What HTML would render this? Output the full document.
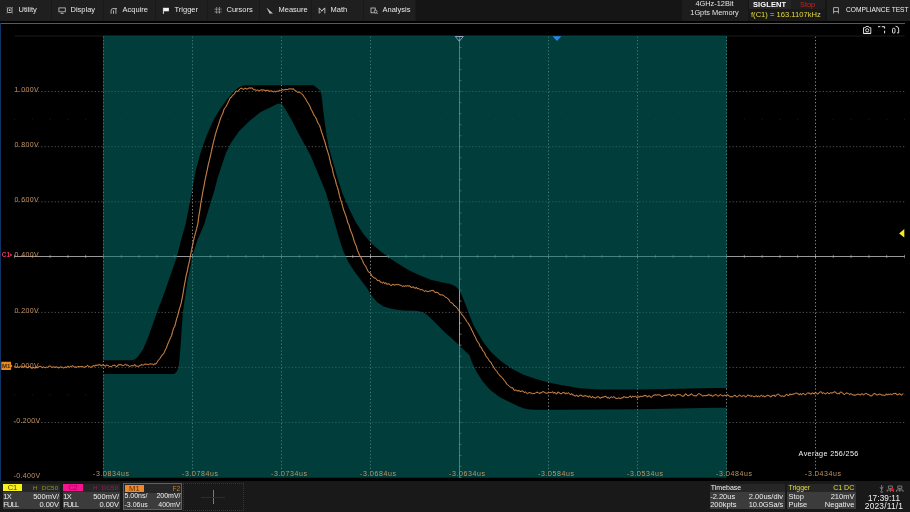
<!DOCTYPE html>
<html><head><meta charset="utf-8"><title>scope</title>
<style>
html,body{margin:0;padding:0;background:#000;}
body{width:910px;height:512px;overflow:hidden;position:relative;font-family:"Liberation Sans",sans-serif;}
.ga{will-change:transform;}
.abs{position:absolute;}
#top{left:0;top:0;width:910px;height:21px;background:#151515;}
#menu{left:0;top:0;width:416px;height:21px;background:#1f1f1f;}
.mb{position:absolute;top:0;width:52px;height:21px;box-sizing:border-box;border-right:1px solid #191919;color:#e8e8e8;font-size:7.5px;line-height:19px;}
.mb span{position:absolute;left:18.5px;top:0;}
.mi{position:absolute;left:6px;top:5.5px;}
#blue{left:0;top:22.6px;width:905px;height:1.35px;background:#305ea6;}
#lblue{left:0;top:23px;width:1.2px;height:458px;background:#103366;}
.tb{position:absolute;top:0;height:21px;background:#1d1d1d;color:#e4e4e4;font-size:7.4px;white-space:nowrap;}
.tb div{position:absolute;white-space:nowrap;}
#bot{left:0;top:481.3px;width:910px;height:30.7px;background:#191919;}
.cb{position:absolute;top:483.5px;height:25px;background:#3c3c3c;color:#ececec;font-size:7.5px;}
.cb .hd{position:absolute;left:0;top:0;right:0;height:8.5px;background:#262626;}
.cb div.t{position:absolute;white-space:nowrap;line-height:8px;}
svg text{font-family:"Liberation Sans",sans-serif;}
</style></head><body>
<div id="wrap" style="position:absolute;left:0;top:0;width:910px;height:512px;will-change:transform;">
<div id="top" class="abs"></div>
<div id="menu" class="abs">
<div class="mb" style="left:0px"><svg class="mi" viewBox="0 0 8 9" width="8" height="9"><rect x="1.4" y="1.9" width="4.6" height="4.6" rx="0.8" fill="none" stroke="#cfcfcf" stroke-width="0.8"/><circle cx="3.7" cy="4.2" r="0.9" fill="#cfcfcf"/><path d="M0.6 1.2l1.2 1.1M6.8 1.2l-1.2 1.1M0.6 7.3l1.2-1.1M6.8 7.3l-1.2-1.1" stroke="#bdbdbd" stroke-width="0.7"/></svg><span>Utility</span></div>
<div class="mb" style="left:52px"><svg class="mi" viewBox="0 0 8 9" width="8" height="9"><rect x="0.9" y="1.9" width="6.4" height="3.9" fill="none" stroke="#c8c8c8" stroke-width="0.8"/><path d="M2.6 7.3h3" stroke="#c8c8c8" stroke-width="0.9"/></svg><span>Display</span></div>
<div class="mb" style="left:104px"><svg class="mi" viewBox="0 0 8 9" width="8" height="9"><path d="M1.1 7.8V4.6Q1.1 2.6 3 2.6H6.9M3.5 7.8V4.4M5.9 7.8V2.8" fill="none" stroke="#c8c8c8" stroke-width="0.85"/></svg><span>Acquire</span></div>
<div class="mb" style="left:156px"><svg class="mi" viewBox="0 0 8 9" width="8" height="9"><path d="M1.4 1.8V7.9" stroke="#f2f2f2" stroke-width="0.9"/><path d="M1.6 1.8H6.9V5.3H1.6Z" fill="#f2f2f2"/></svg><span>Trigger</span></div>
<div class="mb" style="left:208px"><svg class="mi" viewBox="0 0 8 9" width="8" height="9"><path d="M2.7 1.2V7.8M5.5 1.2V7.8M0.7 3.1H7.5M0.7 5.9H7.5" fill="none" stroke="#c4c4c4" stroke-width="0.8" stroke-dasharray="1.1 0.45"/></svg><span>Cursors</span></div>
<div class="mb" style="left:260px"><svg class="mi" viewBox="0 0 8 9" width="8" height="9"><path d="M1.4 2.4L7 7.4H3.6Z" fill="#c4c4c4"/><path d="M1.2 2.2L4 7.4" stroke="#c4c4c4" stroke-width="0.7"/></svg><span>Measure</span></div>
<div class="mb" style="left:312px"><svg class="mi" viewBox="0 0 8 9" width="8" height="9"><path d="M1.2 7.4V1.9L4 5L6.8 1.9V7.4" fill="none" stroke="#cfcfcf" stroke-width="0.85"/><path d="M1.6 7.2L6.4 2.1" stroke="#cfcfcf" stroke-width="0.55"/></svg><span>Math</span></div>
<div class="mb" style="left:364px"><svg class="mi" viewBox="0 0 8 9" width="8" height="9"><rect x="1" y="2" width="4.2" height="4.8" fill="none" stroke="#cfcfcf" stroke-width="0.8"/><circle cx="5.6" cy="5.6" r="1.4" fill="#1f1f1f" stroke="#cfcfcf" stroke-width="0.75"/><path d="M6.6 6.7L7.6 8" stroke="#cfcfcf" stroke-width="0.8"/></svg><span>Analysis</span></div>
</div>

<div class="tb" style="left:681.5px;width:66px;">
 <div style="left:0;width:66px;text-align:center;top:-0.6px;line-height:9px;">4GHz-12Bit</div>
 <div style="left:0;width:66px;text-align:center;top:7.9px;line-height:9px;">1Gpts Memory</div>
</div>
<div class="tb" style="left:748.5px;width:76.5px;background:#191919;">
 <div style="left:0;top:0;width:42px;height:9px;background:#262626;"></div><div style="left:42px;top:0;width:34.5px;height:9px;background:#1e1e1e;"></div>
 <div style="left:4.5px;top:0.3px;line-height:9px;font-weight:bold;font-size:7.5px;color:#fff;letter-spacing:0.1px;">SIGLENT</div>
 <div style="left:51.5px;top:0.3px;line-height:9px;color:#cc201c;font-size:7.4px;">Stop</div>
 <div style="left:2.5px;top:9.6px;line-height:9px;color:#e6dc3c;font-size:7.6px;">f(C1) = 163.1107kHz</div>
</div>
<div class="tb" style="left:827px;width:83px;background:#1e1e1e;">
 <svg class="abs" style="left:6px;top:6.5px" width="6" height="7" viewBox="0 0 6 7"><path d="M0.6 6.5V0.6H5.4V6.5M0.6 4.6H5.4" fill="none" stroke="#aaa" stroke-width="1"/></svg>
 <div style="left:19px;top:5px;line-height:9px;font-size:6.65px;color:#f0f0f0;">COMPLIANCE TEST</div>
</div>

<div id="blue" class="abs"></div>
<div id="lblue" class="abs"></div>

<svg class="abs" style="left:0;top:0" width="910" height="512" viewBox="0 0 910 512">
 <!-- grid (under the translucent mask overlay) -->
 <g stroke="#8a8a8a" stroke-width="1" stroke-dasharray="1.25 2.2" fill="none">
<line x1="103.50" y1="36.5" x2="103.50" y2="477.5"/>
<line x1="192.50" y1="36.5" x2="192.50" y2="477.5"/>
<line x1="281.50" y1="36.5" x2="281.50" y2="477.5"/>
<line x1="370.50" y1="36.5" x2="370.50" y2="477.5"/>
<line x1="548.50" y1="36.5" x2="548.50" y2="477.5"/>
<line x1="637.50" y1="36.5" x2="637.50" y2="477.5"/>
<line x1="726.50" y1="36.5" x2="726.50" y2="477.5"/>
<line x1="815.50" y1="36.5" x2="815.50" y2="477.5"/>
 </g>
 <g stroke="#4e4e4e" stroke-width="1" stroke-dasharray="1.3 2.04" fill="none">
<line x1="14.5" y1="91.50" x2="904.5" y2="91.50"/>
<line x1="14.5" y1="146.70" x2="904.5" y2="146.70"/>
<line x1="14.5" y1="201.80" x2="904.5" y2="201.80"/>
<line x1="14.5" y1="312.40" x2="904.5" y2="312.40"/>
<line x1="14.5" y1="367.40" x2="904.5" y2="367.40"/>
<line x1="14.5" y1="422.50" x2="904.5" y2="422.50"/>
 </g>
 <line x1="14.5" y1="36" x2="904.5" y2="36" stroke="#1c1c1c" stroke-width="1"/>
 <g stroke="#989898" stroke-width="1" fill="none">
  <line x1="14.5" y1="256.50" x2="904.5" y2="256.50"/>
  <line x1="459.50" y1="36.5" x2="459.50" y2="477.5"/>
 </g>
 <g stroke="#c8c8c8" stroke-width="0.8" stroke-opacity="0.65">
<line x1="14.50" y1="254.90" x2="14.50" y2="258.10"/>
<line x1="32.30" y1="254.90" x2="32.30" y2="258.10"/>
<line x1="50.10" y1="254.90" x2="50.10" y2="258.10"/>
<line x1="67.90" y1="254.90" x2="67.90" y2="258.10"/>
<line x1="85.70" y1="254.90" x2="85.70" y2="258.10"/>
<line x1="103.50" y1="254.90" x2="103.50" y2="258.10"/>
<line x1="121.30" y1="254.90" x2="121.30" y2="258.10"/>
<line x1="139.10" y1="254.90" x2="139.10" y2="258.10"/>
<line x1="156.90" y1="254.90" x2="156.90" y2="258.10"/>
<line x1="174.70" y1="254.90" x2="174.70" y2="258.10"/>
<line x1="192.50" y1="254.90" x2="192.50" y2="258.10"/>
<line x1="210.30" y1="254.90" x2="210.30" y2="258.10"/>
<line x1="228.10" y1="254.90" x2="228.10" y2="258.10"/>
<line x1="245.90" y1="254.90" x2="245.90" y2="258.10"/>
<line x1="263.70" y1="254.90" x2="263.70" y2="258.10"/>
<line x1="281.50" y1="254.90" x2="281.50" y2="258.10"/>
<line x1="299.30" y1="254.90" x2="299.30" y2="258.10"/>
<line x1="317.10" y1="254.90" x2="317.10" y2="258.10"/>
<line x1="334.90" y1="254.90" x2="334.90" y2="258.10"/>
<line x1="352.70" y1="254.90" x2="352.70" y2="258.10"/>
<line x1="370.50" y1="254.90" x2="370.50" y2="258.10"/>
<line x1="388.30" y1="254.90" x2="388.30" y2="258.10"/>
<line x1="406.10" y1="254.90" x2="406.10" y2="258.10"/>
<line x1="423.90" y1="254.90" x2="423.90" y2="258.10"/>
<line x1="441.70" y1="254.90" x2="441.70" y2="258.10"/>
<line x1="459.50" y1="254.90" x2="459.50" y2="258.10"/>
<line x1="477.30" y1="254.90" x2="477.30" y2="258.10"/>
<line x1="495.10" y1="254.90" x2="495.10" y2="258.10"/>
<line x1="512.90" y1="254.90" x2="512.90" y2="258.10"/>
<line x1="530.70" y1="254.90" x2="530.70" y2="258.10"/>
<line x1="548.50" y1="254.90" x2="548.50" y2="258.10"/>
<line x1="566.30" y1="254.90" x2="566.30" y2="258.10"/>
<line x1="584.10" y1="254.90" x2="584.10" y2="258.10"/>
<line x1="601.90" y1="254.90" x2="601.90" y2="258.10"/>
<line x1="619.70" y1="254.90" x2="619.70" y2="258.10"/>
<line x1="637.50" y1="254.90" x2="637.50" y2="258.10"/>
<line x1="655.30" y1="254.90" x2="655.30" y2="258.10"/>
<line x1="673.10" y1="254.90" x2="673.10" y2="258.10"/>
<line x1="690.90" y1="254.90" x2="690.90" y2="258.10"/>
<line x1="708.70" y1="254.90" x2="708.70" y2="258.10"/>
<line x1="726.50" y1="254.90" x2="726.50" y2="258.10"/>
<line x1="744.30" y1="254.90" x2="744.30" y2="258.10"/>
<line x1="762.10" y1="254.90" x2="762.10" y2="258.10"/>
<line x1="779.90" y1="254.90" x2="779.90" y2="258.10"/>
<line x1="797.70" y1="254.90" x2="797.70" y2="258.10"/>
<line x1="815.50" y1="254.90" x2="815.50" y2="258.10"/>
<line x1="833.30" y1="254.90" x2="833.30" y2="258.10"/>
<line x1="851.10" y1="254.90" x2="851.10" y2="258.10"/>
<line x1="868.90" y1="254.90" x2="868.90" y2="258.10"/>
<line x1="886.70" y1="254.90" x2="886.70" y2="258.10"/>
<line x1="904.50" y1="254.90" x2="904.50" y2="258.10"/>
<line x1="459.00" y1="36.50" x2="461.50" y2="36.50"/>
<line x1="459.00" y1="47.52" x2="461.50" y2="47.52"/>
<line x1="459.00" y1="58.55" x2="461.50" y2="58.55"/>
<line x1="459.00" y1="69.58" x2="461.50" y2="69.58"/>
<line x1="459.00" y1="80.60" x2="461.50" y2="80.60"/>
<line x1="459.00" y1="91.62" x2="461.50" y2="91.62"/>
<line x1="459.00" y1="102.65" x2="461.50" y2="102.65"/>
<line x1="459.00" y1="113.67" x2="461.50" y2="113.67"/>
<line x1="459.00" y1="124.70" x2="461.50" y2="124.70"/>
<line x1="459.00" y1="135.72" x2="461.50" y2="135.72"/>
<line x1="459.00" y1="146.75" x2="461.50" y2="146.75"/>
<line x1="459.00" y1="157.78" x2="461.50" y2="157.78"/>
<line x1="459.00" y1="168.80" x2="461.50" y2="168.80"/>
<line x1="459.00" y1="179.82" x2="461.50" y2="179.82"/>
<line x1="459.00" y1="190.85" x2="461.50" y2="190.85"/>
<line x1="459.00" y1="201.88" x2="461.50" y2="201.88"/>
<line x1="459.00" y1="212.90" x2="461.50" y2="212.90"/>
<line x1="459.00" y1="223.93" x2="461.50" y2="223.93"/>
<line x1="459.00" y1="234.95" x2="461.50" y2="234.95"/>
<line x1="459.00" y1="245.97" x2="461.50" y2="245.97"/>
<line x1="459.00" y1="257.00" x2="461.50" y2="257.00"/>
<line x1="459.00" y1="268.02" x2="461.50" y2="268.02"/>
<line x1="459.00" y1="279.05" x2="461.50" y2="279.05"/>
<line x1="459.00" y1="290.07" x2="461.50" y2="290.07"/>
<line x1="459.00" y1="301.10" x2="461.50" y2="301.10"/>
<line x1="459.00" y1="312.12" x2="461.50" y2="312.12"/>
<line x1="459.00" y1="323.15" x2="461.50" y2="323.15"/>
<line x1="459.00" y1="334.18" x2="461.50" y2="334.18"/>
<line x1="459.00" y1="345.20" x2="461.50" y2="345.20"/>
<line x1="459.00" y1="356.23" x2="461.50" y2="356.23"/>
<line x1="459.00" y1="367.25" x2="461.50" y2="367.25"/>
<line x1="459.00" y1="378.27" x2="461.50" y2="378.27"/>
<line x1="459.00" y1="389.30" x2="461.50" y2="389.30"/>
<line x1="459.00" y1="400.32" x2="461.50" y2="400.32"/>
<line x1="459.00" y1="411.35" x2="461.50" y2="411.35"/>
<line x1="459.00" y1="422.38" x2="461.50" y2="422.38"/>
<line x1="459.00" y1="433.40" x2="461.50" y2="433.40"/>
<line x1="459.00" y1="444.43" x2="461.50" y2="444.43"/>
<line x1="459.00" y1="455.45" x2="461.50" y2="455.45"/>
<line x1="459.00" y1="466.48" x2="461.50" y2="466.48"/>
<line x1="459.00" y1="477.50" x2="461.50" y2="477.50"/>
 </g>
 <g fill="#8a8a8a" fill-opacity="0.22">
<rect x="14.00" y="118.69" width="1" height="1"/>
<rect x="31.80" y="118.69" width="1" height="1"/>
<rect x="49.60" y="118.69" width="1" height="1"/>
<rect x="67.40" y="118.69" width="1" height="1"/>
<rect x="85.20" y="118.69" width="1" height="1"/>
<rect x="103.00" y="118.69" width="1" height="1"/>
<rect x="120.80" y="118.69" width="1" height="1"/>
<rect x="138.60" y="118.69" width="1" height="1"/>
<rect x="156.40" y="118.69" width="1" height="1"/>
<rect x="174.20" y="118.69" width="1" height="1"/>
<rect x="192.00" y="118.69" width="1" height="1"/>
<rect x="209.80" y="118.69" width="1" height="1"/>
<rect x="227.60" y="118.69" width="1" height="1"/>
<rect x="245.40" y="118.69" width="1" height="1"/>
<rect x="263.20" y="118.69" width="1" height="1"/>
<rect x="281.00" y="118.69" width="1" height="1"/>
<rect x="298.80" y="118.69" width="1" height="1"/>
<rect x="316.60" y="118.69" width="1" height="1"/>
<rect x="334.40" y="118.69" width="1" height="1"/>
<rect x="352.20" y="118.69" width="1" height="1"/>
<rect x="370.00" y="118.69" width="1" height="1"/>
<rect x="387.80" y="118.69" width="1" height="1"/>
<rect x="405.60" y="118.69" width="1" height="1"/>
<rect x="423.40" y="118.69" width="1" height="1"/>
<rect x="441.20" y="118.69" width="1" height="1"/>
<rect x="459.00" y="118.69" width="1" height="1"/>
<rect x="476.80" y="118.69" width="1" height="1"/>
<rect x="494.60" y="118.69" width="1" height="1"/>
<rect x="512.40" y="118.69" width="1" height="1"/>
<rect x="530.20" y="118.69" width="1" height="1"/>
<rect x="548.00" y="118.69" width="1" height="1"/>
<rect x="565.80" y="118.69" width="1" height="1"/>
<rect x="583.60" y="118.69" width="1" height="1"/>
<rect x="601.40" y="118.69" width="1" height="1"/>
<rect x="619.20" y="118.69" width="1" height="1"/>
<rect x="637.00" y="118.69" width="1" height="1"/>
<rect x="654.80" y="118.69" width="1" height="1"/>
<rect x="672.60" y="118.69" width="1" height="1"/>
<rect x="690.40" y="118.69" width="1" height="1"/>
<rect x="708.20" y="118.69" width="1" height="1"/>
<rect x="726.00" y="118.69" width="1" height="1"/>
<rect x="743.80" y="118.69" width="1" height="1"/>
<rect x="761.60" y="118.69" width="1" height="1"/>
<rect x="779.40" y="118.69" width="1" height="1"/>
<rect x="797.20" y="118.69" width="1" height="1"/>
<rect x="815.00" y="118.69" width="1" height="1"/>
<rect x="832.80" y="118.69" width="1" height="1"/>
<rect x="850.60" y="118.69" width="1" height="1"/>
<rect x="868.40" y="118.69" width="1" height="1"/>
<rect x="886.20" y="118.69" width="1" height="1"/>
<rect x="904.00" y="118.69" width="1" height="1"/>
<rect x="14.00" y="394.31" width="1" height="1"/>
<rect x="31.80" y="394.31" width="1" height="1"/>
<rect x="49.60" y="394.31" width="1" height="1"/>
<rect x="67.40" y="394.31" width="1" height="1"/>
<rect x="85.20" y="394.31" width="1" height="1"/>
<rect x="103.00" y="394.31" width="1" height="1"/>
<rect x="120.80" y="394.31" width="1" height="1"/>
<rect x="138.60" y="394.31" width="1" height="1"/>
<rect x="156.40" y="394.31" width="1" height="1"/>
<rect x="174.20" y="394.31" width="1" height="1"/>
<rect x="192.00" y="394.31" width="1" height="1"/>
<rect x="209.80" y="394.31" width="1" height="1"/>
<rect x="227.60" y="394.31" width="1" height="1"/>
<rect x="245.40" y="394.31" width="1" height="1"/>
<rect x="263.20" y="394.31" width="1" height="1"/>
<rect x="281.00" y="394.31" width="1" height="1"/>
<rect x="298.80" y="394.31" width="1" height="1"/>
<rect x="316.60" y="394.31" width="1" height="1"/>
<rect x="334.40" y="394.31" width="1" height="1"/>
<rect x="352.20" y="394.31" width="1" height="1"/>
<rect x="370.00" y="394.31" width="1" height="1"/>
<rect x="387.80" y="394.31" width="1" height="1"/>
<rect x="405.60" y="394.31" width="1" height="1"/>
<rect x="423.40" y="394.31" width="1" height="1"/>
<rect x="441.20" y="394.31" width="1" height="1"/>
<rect x="459.00" y="394.31" width="1" height="1"/>
<rect x="476.80" y="394.31" width="1" height="1"/>
<rect x="494.60" y="394.31" width="1" height="1"/>
<rect x="512.40" y="394.31" width="1" height="1"/>
<rect x="530.20" y="394.31" width="1" height="1"/>
<rect x="548.00" y="394.31" width="1" height="1"/>
<rect x="565.80" y="394.31" width="1" height="1"/>
<rect x="583.60" y="394.31" width="1" height="1"/>
<rect x="601.40" y="394.31" width="1" height="1"/>
<rect x="619.20" y="394.31" width="1" height="1"/>
<rect x="637.00" y="394.31" width="1" height="1"/>
<rect x="654.80" y="394.31" width="1" height="1"/>
<rect x="672.60" y="394.31" width="1" height="1"/>
<rect x="690.40" y="394.31" width="1" height="1"/>
<rect x="708.20" y="394.31" width="1" height="1"/>
<rect x="726.00" y="394.31" width="1" height="1"/>
<rect x="743.80" y="394.31" width="1" height="1"/>
<rect x="761.60" y="394.31" width="1" height="1"/>
<rect x="779.40" y="394.31" width="1" height="1"/>
<rect x="797.20" y="394.31" width="1" height="1"/>
<rect x="815.00" y="394.31" width="1" height="1"/>
<rect x="832.80" y="394.31" width="1" height="1"/>
<rect x="850.60" y="394.31" width="1" height="1"/>
<rect x="868.40" y="394.31" width="1" height="1"/>
<rect x="886.20" y="394.31" width="1" height="1"/>
<rect x="904.00" y="394.31" width="1" height="1"/>
 </g>
 <!-- translucent teal pass-region with the mask band cut out -->
 <path d="M103.0,35.7H726.9V477.8H103.0Z M103.0,360.3 L132.3,360.3 L135.0,359.3 L137.6,357.1 L143.0,349.6 L148.4,336.7 L153.8,321.6 L159.1,306.6 L162.3,298.5 L166.4,286.9 L170.5,275.2 L177.0,256.4 L181.1,240.0 L185.5,224.5 L189.8,203.0 L192.2,190.0 L195.8,170.3 L201.1,151.0 L206.5,136.0 L213.0,120.9 L219.4,110.1 L226.9,99.4 L233.4,91.8 L238.8,87.5 L241.5,86.0 L244.5,85.3 L313.7,85.3 L320.2,90.8 L321.5,95.0 L322.3,101.5 L323.4,112.3 L324.9,123.0 L326.6,135.9 L329.8,151.0 L334.1,166.0 L338.2,180.0 L342.3,192.9 L348.7,208.0 L356.2,223.0 L363.8,234.5 L371.5,243.5 L379.3,250.2 L387.9,257.0 L398.6,264.0 L409.4,270.5 L420.1,275.4 L430.8,279.7 L441.6,282.3 L450.2,284.0 L455.5,286.2 L458.0,288.7 L459.8,291.5 L463.0,298.0 L466.3,306.5 L469.5,315.1 L473.8,325.9 L480.0,336.6 L483.3,342.2 L491.9,352.9 L501.5,361.5 L512.3,369.0 L523.0,374.4 L535.9,379.1 L548.8,382.6 L561.6,385.3 L570.0,386.6 L579.8,388.2 L599.6,389.4 L639.0,389.4 L678.7,388.8 L726.9,387.8 L726.9,407.6 L678.7,408.6 L639.0,409.2 L599.6,409.6 L560.0,409.7 L535.9,409.8 L530.0,409.5 L525.1,408.8 L518.7,406.6 L510.1,402.3 L499.4,396.9 L489.7,389.4 L482.2,380.8 L476.8,372.3 L472.5,363.7 L469.3,355.1 L464.0,350.0 L459.0,345.0 L454.5,340.9 L450.0,336.8 L445.9,333.4 L437.3,324.8 L428.7,316.2 L425.0,313.3 L422.3,311.9 L415.8,310.8 L402.9,310.4 L392.2,309.1 L383.6,306.5 L377.2,302.3 L371.8,295.8 L366.4,287.2 L361.6,281.0 L355.2,272.5 L348.7,262.8 L343.3,251.0 L339.0,238.0 L334.7,223.0 L330.4,208.0 L326.1,192.9 L321.2,181.1 L315.9,168.2 L310.5,155.3 L305.1,145.6 L298.7,133.8 L292.2,120.9 L285.8,110.1 L283.0,105.5 L281.5,103.8 L277.5,103.8 L271.0,106.9 L260.3,112.3 L249.5,120.9 L238.8,131.6 L231.2,142.4 L225.9,153.1 L221.6,166.0 L217.3,179.0 L214.5,190.0 L210.5,203.0 L204.1,224.5 L197.5,240.0 L192.2,256.4 L189.9,269.3 L187.5,281.0 L185.8,292.8 L184.6,300.0 L182.8,313.0 L181.6,330.0 L180.6,345.3 L179.6,358.0 L178.5,367.8 L176.8,371.5 L174.2,373.9 L103.0,373.9Z" fill="#006f6b" fill-opacity="0.55" fill-rule="evenodd"/>
 <!-- labels -->
 <g font-size="7" fill="#c49464">
<text x="14.6" y="91.8" textLength="24" lengthAdjust="spacing">1.000V</text>
<text x="14.6" y="147.0" textLength="24" lengthAdjust="spacing">0.800V</text>
<text x="14.6" y="202.1" textLength="24" lengthAdjust="spacing">0.600V</text>
<text x="14.6" y="256.8" textLength="24" lengthAdjust="spacing">0.400V</text>
<text x="14.6" y="312.7" textLength="24" lengthAdjust="spacing">0.200V</text>
<text x="14.6" y="367.7" textLength="24" lengthAdjust="spacing">0.000V</text>
<text x="13.6" y="422.8" textLength="26.6" lengthAdjust="spacing">-0.200V</text>
<text x="13.6" y="477.9" textLength="26.6" lengthAdjust="spacing">-0.400V</text>
<text x="93.1" y="475.8" textLength="36" lengthAdjust="spacing">-3.0834us</text>
<text x="182.1" y="475.8" textLength="36" lengthAdjust="spacing">-3.0784us</text>
<text x="271.1" y="475.8" textLength="36" lengthAdjust="spacing">-3.0734us</text>
<text x="360.1" y="475.8" textLength="36" lengthAdjust="spacing">-3.0684us</text>
<text x="449.1" y="475.8" textLength="36" lengthAdjust="spacing">-3.0634us</text>
<text x="538.1" y="475.8" textLength="36" lengthAdjust="spacing">-3.0584us</text>
<text x="627.1" y="475.8" textLength="36" lengthAdjust="spacing">-3.0534us</text>
<text x="716.1" y="475.8" textLength="36" lengthAdjust="spacing">-3.0484us</text>
<text x="805.1" y="475.8" textLength="36" lengthAdjust="spacing">-3.0434us</text>
 </g>
 <!-- trace -->
 <path d="M14.0,367.0 L15.1,366.5 L16.1,367.5 L17.2,366.5 L18.2,367.3 L19.3,367.1 L20.3,366.3 L21.4,367.2 L22.4,366.3 L23.5,367.0 L24.5,366.3 L25.6,366.2 L26.6,366.9 L27.7,368.0 L28.7,366.7 L29.8,366.6 L30.8,367.5 L31.9,368.4 L32.9,367.8 L34.0,367.3 L35.0,368.4 L36.1,366.7 L37.1,368.0 L38.1,367.1 L39.2,366.5 L40.2,366.3 L41.3,366.7 L42.3,367.9 L43.4,366.8 L44.4,367.4 L45.5,367.7 L46.5,367.1 L47.6,367.4 L48.6,366.4 L49.7,366.1 L50.7,366.3 L51.8,367.4 L52.8,367.2 L53.9,366.8 L54.9,367.3 L56.0,367.2 L57.0,366.8 L58.1,367.8 L59.1,367.8 L60.2,366.8 L61.2,367.2 L62.3,367.2 L63.3,367.9 L64.4,367.7 L65.4,366.7 L66.5,367.9 L67.5,366.3 L68.6,366.5 L69.6,367.3 L70.7,366.1 L71.7,366.5 L72.8,365.6 L73.8,366.8 L74.9,367.2 L75.9,366.9 L77.0,367.4 L78.0,366.3 L79.1,366.8 L80.1,366.7 L81.2,366.6 L82.2,366.3 L83.3,367.0 L84.3,367.4 L85.4,366.5 L86.4,366.6 L87.5,365.3 L88.5,366.4 L89.6,366.5 L90.6,367.3 L91.7,367.0 L92.7,365.8 L93.8,365.7 L94.8,366.2 L95.9,364.9 L96.9,365.6 L98.0,365.0 L99.0,364.8 L100.1,364.6 L101.1,366.0 L102.2,365.0 L103.2,365.0 L104.3,365.3 L105.3,366.4 L106.4,364.9 L107.4,365.4 L108.5,365.7 L109.5,366.5 L110.6,366.5 L111.6,366.6 L112.7,365.4 L113.7,365.4 L114.8,365.2 L115.8,366.3 L116.9,366.8 L117.9,365.1 L119.0,364.7 L120.0,364.7 L121.1,364.7 L122.1,365.3 L123.2,365.6 L124.2,365.0 L125.3,364.3 L126.3,365.0 L127.4,365.1 L128.4,365.5 L129.5,366.4 L130.5,366.1 L131.6,365.6 L132.6,365.7 L133.7,365.9 L134.7,364.5 L135.8,366.0 L136.8,366.1 L137.9,366.4 L138.9,366.3 L140.0,365.3 L141.0,365.1 L142.1,364.4 L143.1,365.4 L144.2,364.3 L145.2,364.1 L146.3,364.3 L147.3,364.3 L148.4,364.7 L149.4,364.1 L150.5,363.8 L151.6,364.1 L152.6,364.1 L153.7,365.0 L154.7,363.6 L155.8,364.1 L156.8,362.7 L157.9,360.9 L158.9,359.7 L160.0,358.3 L161.0,356.8 L162.1,354.9 L163.1,354.4 L164.2,352.7 L165.2,350.0 L166.3,348.2 L167.3,345.2 L168.4,342.6 L169.4,340.4 L170.5,337.7 L171.5,335.8 L172.6,331.5 L173.6,328.1 L174.7,326.5 L175.7,322.5 L176.8,318.3 L177.8,315.4 L178.9,310.8 L179.9,307.4 L181.0,303.9 L182.0,299.0 L183.1,293.0 L184.1,286.6 L185.2,281.0 L186.2,275.3 L187.3,271.0 L188.3,265.8 L189.4,261.5 L190.4,256.1 L191.5,250.2 L192.5,245.4 L193.6,240.3 L194.6,236.2 L195.7,232.2 L196.7,228.4 L197.8,223.9 L198.8,216.2 L199.9,209.9 L200.9,202.8 L202.0,196.5 L203.0,190.8 L204.1,185.5 L205.1,179.7 L206.2,174.7 L207.2,170.1 L208.3,164.5 L209.3,160.6 L210.4,156.0 L211.4,151.5 L212.5,146.3 L213.5,141.9 L214.6,137.7 L215.6,133.7 L216.7,130.1 L217.7,127.1 L218.8,123.9 L219.8,120.5 L220.9,117.4 L221.9,115.2 L223.0,112.9 L224.0,109.2 L225.1,107.8 L226.1,106.4 L227.2,104.3 L228.2,102.3 L229.3,100.0 L230.3,97.6 L231.4,97.4 L232.4,95.3 L233.5,94.8 L234.5,93.8 L235.6,91.6 L236.6,91.1 L237.7,91.4 L238.7,90.5 L239.8,89.0 L240.8,88.3 L241.9,88.2 L242.9,89.2 L244.0,89.2 L245.0,88.1 L246.1,88.7 L247.1,89.0 L248.2,88.5 L249.2,87.9 L250.3,88.2 L251.3,88.0 L252.4,88.0 L253.4,89.6 L254.5,89.8 L255.5,89.9 L256.6,90.5 L257.6,90.0 L258.7,90.6 L259.7,90.7 L260.8,90.0 L261.8,89.9 L262.9,90.0 L263.9,90.0 L265.0,90.6 L266.0,90.3 L267.1,90.5 L268.1,90.3 L269.2,91.3 L270.2,90.9 L271.3,91.0 L272.3,91.3 L273.4,91.8 L274.4,91.3 L275.5,91.8 L276.5,91.3 L277.6,91.2 L278.6,91.1 L279.7,90.3 L280.7,90.6 L281.8,90.1 L282.8,89.5 L283.9,90.3 L284.9,89.4 L286.0,89.4 L287.0,89.6 L288.1,89.3 L289.1,88.9 L290.2,88.9 L291.2,88.9 L292.3,89.2 L293.3,88.6 L294.4,90.2 L295.4,90.6 L296.5,91.2 L297.5,92.3 L298.6,92.2 L299.6,92.4 L300.7,92.9 L301.7,93.8 L302.8,94.5 L303.8,96.4 L304.9,97.8 L305.9,99.4 L307.0,101.5 L308.0,103.0 L309.1,104.9 L310.1,106.7 L311.2,109.6 L312.2,111.2 L313.3,113.6 L314.3,115.9 L315.4,116.8 L316.4,119.3 L317.5,122.0 L318.5,123.9 L319.6,125.4 L320.6,128.7 L321.7,132.5 L322.7,135.2 L323.8,138.7 L324.8,141.6 L325.9,145.7 L326.9,149.1 L328.0,152.7 L329.0,155.7 L330.1,160.8 L331.1,164.9 L332.2,168.0 L333.2,173.2 L334.3,177.2 L335.3,179.6 L336.4,184.5 L337.4,187.2 L338.5,191.0 L339.5,195.7 L340.6,199.5 L341.6,202.5 L342.7,206.7 L343.7,210.0 L344.8,212.9 L345.8,215.8 L346.9,219.1 L347.9,223.0 L349.0,224.9 L350.0,229.0 L351.1,231.9 L352.1,234.2 L353.2,237.7 L354.2,241.2 L355.3,244.0 L356.3,246.2 L357.4,250.3 L358.4,252.4 L359.5,255.3 L360.5,256.3 L361.6,259.1 L362.6,260.6 L363.7,263.8 L364.7,264.9 L365.8,266.5 L366.8,268.7 L367.9,271.0 L368.9,272.3 L370.0,272.8 L371.0,274.0 L372.1,276.4 L373.1,276.8 L374.2,278.1 L375.2,278.1 L376.3,279.0 L377.3,280.5 L378.4,280.5 L379.4,280.4 L380.5,282.3 L381.5,282.2 L382.6,283.0 L383.6,282.1 L384.7,283.7 L385.7,282.7 L386.8,284.3 L387.8,284.0 L388.9,283.9 L389.9,284.5 L391.0,285.7 L392.0,284.8 L393.1,284.3 L394.1,285.1 L395.2,284.8 L396.2,284.5 L397.3,284.7 L398.3,284.5 L399.4,284.9 L400.4,285.3 L401.5,285.5 L402.5,286.6 L403.6,285.9 L404.6,286.3 L405.7,285.8 L406.7,286.1 L407.8,285.6 L408.8,286.1 L409.9,285.8 L410.9,287.3 L412.0,287.4 L413.0,286.8 L414.1,287.3 L415.1,288.5 L416.2,287.2 L417.2,288.7 L418.3,288.5 L419.3,288.8 L420.4,289.9 L421.4,289.5 L422.5,289.9 L423.5,290.6 L424.6,291.6 L425.6,290.6 L426.7,291.4 L427.7,291.5 L428.8,291.4 L429.8,291.0 L430.9,290.9 L431.9,290.4 L433.0,290.5 L434.0,291.1 L435.1,292.7 L436.1,292.2 L437.2,292.5 L438.2,292.7 L439.3,294.4 L440.3,294.8 L441.4,294.9 L442.4,294.9 L443.5,295.5 L444.5,296.3 L445.6,297.3 L446.6,297.5 L447.7,298.7 L448.7,299.3 L449.8,301.5 L450.8,302.6 L451.9,302.9 L452.9,303.5 L454.0,305.7 L455.0,305.8 L456.1,307.1 L457.1,307.8 L458.2,309.7 L459.2,311.1 L460.3,312.5 L461.3,313.5 L462.4,315.4 L463.4,316.1 L464.5,318.0 L465.5,319.2 L466.6,321.4 L467.6,322.4 L468.7,324.0 L469.7,326.1 L470.8,327.7 L471.8,330.1 L472.9,332.1 L473.9,334.6 L475.0,336.5 L476.0,338.7 L477.1,341.1 L478.1,342.3 L479.2,344.0 L480.2,346.9 L481.3,347.2 L482.3,349.9 L483.4,351.6 L484.4,352.3 L485.5,355.2 L486.5,356.9 L487.6,358.0 L488.6,359.7 L489.7,361.5 L490.7,361.9 L491.8,364.1 L492.8,365.7 L493.9,367.7 L494.9,369.1 L496.0,370.5 L497.0,371.6 L498.1,373.5 L499.1,374.6 L500.2,376.1 L501.2,376.7 L502.3,377.7 L503.3,379.1 L504.4,380.7 L505.4,381.4 L506.5,383.9 L507.5,384.6 L508.6,385.7 L509.6,386.5 L510.7,387.4 L511.7,387.9 L512.8,387.8 L513.8,390.0 L514.9,390.4 L515.9,390.0 L517.0,390.6 L518.0,391.2 L519.1,390.3 L520.1,391.7 L521.2,391.2 L522.2,390.9 L523.3,391.4 L524.3,392.6 L525.4,391.8 L526.4,392.9 L527.5,393.7 L528.5,392.9 L529.6,392.6 L530.6,392.8 L531.7,393.3 L532.7,393.7 L533.8,393.5 L534.8,393.6 L535.9,392.5 L536.9,392.3 L538.0,392.4 L539.0,393.5 L540.1,392.7 L541.1,393.1 L542.2,391.9 L543.2,391.7 L544.3,392.0 L545.3,393.0 L546.4,393.2 L547.4,393.2 L548.5,392.3 L549.5,392.6 L550.6,392.5 L551.6,392.5 L552.7,391.8 L553.7,393.3 L554.8,392.2 L555.8,393.6 L556.9,393.9 L557.9,392.0 L559.0,392.5 L560.0,393.4 L561.1,394.0 L562.1,393.0 L563.2,392.5 L564.2,392.4 L565.3,394.0 L566.3,392.9 L567.4,393.6 L568.4,392.8 L569.5,393.6 L570.5,394.9 L571.6,393.6 L572.6,395.0 L573.7,394.9 L574.7,395.9 L575.8,395.9 L576.8,395.1 L577.9,396.6 L578.9,396.2 L580.0,395.3 L581.0,395.0 L582.1,396.1 L583.1,396.3 L584.2,396.0 L585.2,395.6 L586.3,396.0 L587.3,396.1 L588.4,397.3 L589.4,395.8 L590.5,397.1 L591.5,397.7 L592.6,396.3 L593.6,397.7 L594.7,397.7 L595.7,398.1 L596.8,396.9 L597.8,396.8 L598.9,396.9 L599.9,398.3 L601.0,397.8 L602.0,397.2 L603.0,397.2 L604.1,396.9 L605.1,396.4 L606.2,396.4 L607.2,398.0 L608.3,397.3 L609.3,398.6 L610.4,397.3 L611.4,397.0 L612.5,397.5 L613.5,396.8 L614.6,397.1 L615.6,398.4 L616.7,398.5 L617.7,398.4 L618.8,397.9 L619.8,398.4 L620.9,398.5 L621.9,397.7 L623.0,397.8 L624.0,396.4 L625.1,397.5 L626.1,397.1 L627.2,397.6 L628.2,397.5 L629.3,396.7 L630.3,395.9 L631.4,397.6 L632.4,396.3 L633.5,396.7 L634.5,396.5 L635.6,396.3 L636.6,397.2 L637.7,397.9 L638.7,396.5 L639.8,396.9 L640.8,396.2 L641.9,396.6 L642.9,396.3 L644.0,395.7 L645.0,395.5 L646.1,395.5 L647.1,397.0 L648.2,396.4 L649.2,395.6 L650.3,396.9 L651.3,397.4 L652.4,396.2 L653.4,395.2 L654.5,395.1 L655.5,394.8 L656.6,395.2 L657.6,394.7 L658.7,394.9 L659.7,394.9 L660.8,395.6 L661.8,396.5 L662.9,396.4 L663.9,395.6 L665.0,395.4 L666.0,395.5 L667.1,395.2 L668.1,395.0 L669.2,394.4 L670.2,394.7 L671.3,396.2 L672.3,394.7 L673.4,395.2 L674.4,395.6 L675.5,396.1 L676.5,394.8 L677.6,394.6 L678.6,394.5 L679.7,394.8 L680.7,394.9 L681.8,396.1 L682.8,396.1 L683.9,396.1 L684.9,394.3 L686.0,393.8 L687.0,395.1 L688.1,395.9 L689.1,395.1 L690.2,395.1 L691.2,393.8 L692.3,394.4 L693.3,395.6 L694.4,395.7 L695.4,395.8 L696.5,396.0 L697.5,394.5 L698.6,393.8 L699.6,393.8 L700.7,394.6 L701.7,395.2 L702.8,396.0 L703.8,395.7 L704.9,395.5 L705.9,395.8 L707.0,395.2 L708.0,395.3 L709.1,394.3 L710.1,395.7 L711.2,394.9 L712.2,396.2 L713.3,396.0 L714.3,395.2 L715.4,394.7 L716.4,394.8 L717.5,395.8 L718.5,396.2 L719.6,395.0 L720.6,394.6 L721.7,395.5 L722.7,395.9 L723.8,395.6 L724.8,395.2 L725.9,395.9 L726.9,394.8 L728.0,395.2 L729.0,395.6 L730.1,396.9 L731.1,396.5 L732.2,396.9 L733.2,396.2 L734.3,395.5 L735.3,395.3 L736.4,396.9 L737.4,396.7 L738.5,395.8 L739.5,395.0 L740.6,395.8 L741.6,396.4 L742.7,396.0 L743.7,395.5 L744.8,396.3 L745.8,397.1 L746.9,395.7 L747.9,395.0 L749.0,395.5 L750.0,395.8 L751.1,396.4 L752.1,395.5 L753.2,396.6 L754.2,396.8 L755.3,396.3 L756.3,395.5 L757.4,397.0 L758.4,395.9 L759.5,396.8 L760.5,395.7 L761.6,395.4 L762.6,396.5 L763.7,395.7 L764.7,397.0 L765.8,396.3 L766.8,395.5 L767.9,395.3 L768.9,395.7 L770.0,396.3 L771.0,397.1 L772.1,395.4 L773.1,395.5 L774.2,395.1 L775.2,396.6 L776.3,395.1 L777.3,394.4 L778.4,394.2 L779.4,394.9 L780.5,396.1 L781.5,396.3 L782.6,395.9 L783.6,396.4 L784.7,396.3 L785.7,394.9 L786.8,394.2 L787.8,395.6 L788.9,395.5 L789.9,393.8 L791.0,394.8 L792.0,394.3 L793.1,394.2 L794.1,394.0 L795.2,393.5 L796.2,393.0 L797.3,393.5 L798.3,393.7 L799.4,395.0 L800.4,393.5 L801.5,394.9 L802.5,393.6 L803.6,393.5 L804.6,394.5 L805.7,394.7 L806.7,393.8 L807.8,392.7 L808.8,393.3 L809.9,393.2 L810.9,394.4 L812.0,393.0 L813.0,393.0 L814.1,394.1 L815.1,392.5 L816.2,392.9 L817.2,393.8 L818.3,393.9 L819.3,392.4 L820.4,391.9 L821.4,391.9 L822.5,393.7 L823.5,392.7 L824.6,393.5 L825.6,394.0 L826.7,392.9 L827.7,392.5 L828.8,393.8 L829.8,393.4 L830.9,392.5 L831.9,393.2 L833.0,392.5 L834.0,392.2 L835.1,391.6 L836.1,393.0 L837.2,393.7 L838.2,393.3 L839.3,393.9 L840.3,392.1 L841.4,392.2 L842.4,392.8 L843.5,394.1 L844.5,394.5 L845.6,393.4 L846.6,393.0 L847.7,393.3 L848.7,393.6 L849.8,394.7 L850.8,393.4 L851.9,394.6 L852.9,394.8 L854.0,395.1 L855.0,395.2 L856.1,394.9 L857.1,394.3 L858.2,394.2 L859.2,394.3 L860.3,395.2 L861.3,393.9 L862.4,393.8 L863.4,395.0 L864.5,394.2 L865.5,393.6 L866.6,393.4 L867.6,394.5 L868.7,394.3 L869.7,395.6 L870.8,395.8 L871.8,396.0 L872.9,394.5 L873.9,393.7 L875.0,393.6 L876.0,394.4 L877.1,395.1 L878.1,394.7 L879.2,394.1 L880.2,394.3 L881.3,394.8 L882.3,395.0 L883.4,395.2 L884.4,395.5 L885.5,395.1 L886.5,393.8 L887.6,395.1 L888.6,394.1 L889.7,394.5 L890.7,394.1 L891.8,394.8 L892.8,393.8 L893.9,393.6 L894.9,393.6 L896.0,393.3 L897.0,394.9 L898.1,394.6 L899.1,393.9 L900.2,393.9 L901.2,395.2 L902.3,394.4 L903.3,393.6" fill="none" stroke="#a85010" stroke-opacity="0.38" stroke-width="1.35" stroke-linejoin="round"/>
 <path d="M14.0,367.0 L15.1,366.5 L16.1,367.5 L17.2,366.5 L18.2,367.3 L19.3,367.1 L20.3,366.3 L21.4,367.2 L22.4,366.3 L23.5,367.0 L24.5,366.3 L25.6,366.2 L26.6,366.9 L27.7,368.0 L28.7,366.7 L29.8,366.6 L30.8,367.5 L31.9,368.4 L32.9,367.8 L34.0,367.3 L35.0,368.4 L36.1,366.7 L37.1,368.0 L38.1,367.1 L39.2,366.5 L40.2,366.3 L41.3,366.7 L42.3,367.9 L43.4,366.8 L44.4,367.4 L45.5,367.7 L46.5,367.1 L47.6,367.4 L48.6,366.4 L49.7,366.1 L50.7,366.3 L51.8,367.4 L52.8,367.2 L53.9,366.8 L54.9,367.3 L56.0,367.2 L57.0,366.8 L58.1,367.8 L59.1,367.8 L60.2,366.8 L61.2,367.2 L62.3,367.2 L63.3,367.9 L64.4,367.7 L65.4,366.7 L66.5,367.9 L67.5,366.3 L68.6,366.5 L69.6,367.3 L70.7,366.1 L71.7,366.5 L72.8,365.6 L73.8,366.8 L74.9,367.2 L75.9,366.9 L77.0,367.4 L78.0,366.3 L79.1,366.8 L80.1,366.7 L81.2,366.6 L82.2,366.3 L83.3,367.0 L84.3,367.4 L85.4,366.5 L86.4,366.6 L87.5,365.3 L88.5,366.4 L89.6,366.5 L90.6,367.3 L91.7,367.0 L92.7,365.8 L93.8,365.7 L94.8,366.2 L95.9,364.9 L96.9,365.6 L98.0,365.0 L99.0,364.8 L100.1,364.6 L101.1,366.0 L102.2,365.0 L103.2,365.0 L104.3,365.3 L105.3,366.4 L106.4,364.9 L107.4,365.4 L108.5,365.7 L109.5,366.5 L110.6,366.5 L111.6,366.6 L112.7,365.4 L113.7,365.4 L114.8,365.2 L115.8,366.3 L116.9,366.8 L117.9,365.1 L119.0,364.7 L120.0,364.7 L121.1,364.7 L122.1,365.3 L123.2,365.6 L124.2,365.0 L125.3,364.3 L126.3,365.0 L127.4,365.1 L128.4,365.5 L129.5,366.4 L130.5,366.1 L131.6,365.6 L132.6,365.7 L133.7,365.9 L134.7,364.5 L135.8,366.0 L136.8,366.1 L137.9,366.4 L138.9,366.3 L140.0,365.3 L141.0,365.1 L142.1,364.4 L143.1,365.4 L144.2,364.3 L145.2,364.1 L146.3,364.3 L147.3,364.3 L148.4,364.7 L149.4,364.1 L150.5,363.8 L151.6,364.1 L152.6,364.1 L153.7,365.0 L154.7,363.6 L155.8,364.1 L156.8,362.7 L157.9,360.9 L158.9,359.7 L160.0,358.3 L161.0,356.8 L162.1,354.9 L163.1,354.4 L164.2,352.7 L165.2,350.0 L166.3,348.2 L167.3,345.2 L168.4,342.6 L169.4,340.4 L170.5,337.7 L171.5,335.8 L172.6,331.5 L173.6,328.1 L174.7,326.5 L175.7,322.5 L176.8,318.3 L177.8,315.4 L178.9,310.8 L179.9,307.4 L181.0,303.9 L182.0,299.0 L183.1,293.0 L184.1,286.6 L185.2,281.0 L186.2,275.3 L187.3,271.0 L188.3,265.8 L189.4,261.5 L190.4,256.1 L191.5,250.2 L192.5,245.4 L193.6,240.3 L194.6,236.2 L195.7,232.2 L196.7,228.4 L197.8,223.9 L198.8,216.2 L199.9,209.9 L200.9,202.8 L202.0,196.5 L203.0,190.8 L204.1,185.5 L205.1,179.7 L206.2,174.7 L207.2,170.1 L208.3,164.5 L209.3,160.6 L210.4,156.0 L211.4,151.5 L212.5,146.3 L213.5,141.9 L214.6,137.7 L215.6,133.7 L216.7,130.1 L217.7,127.1 L218.8,123.9 L219.8,120.5 L220.9,117.4 L221.9,115.2 L223.0,112.9 L224.0,109.2 L225.1,107.8 L226.1,106.4 L227.2,104.3 L228.2,102.3 L229.3,100.0 L230.3,97.6 L231.4,97.4 L232.4,95.3 L233.5,94.8 L234.5,93.8 L235.6,91.6 L236.6,91.1 L237.7,91.4 L238.7,90.5 L239.8,89.0 L240.8,88.3 L241.9,88.2 L242.9,89.2 L244.0,89.2 L245.0,88.1 L246.1,88.7 L247.1,89.0 L248.2,88.5 L249.2,87.9 L250.3,88.2 L251.3,88.0 L252.4,88.0 L253.4,89.6 L254.5,89.8 L255.5,89.9 L256.6,90.5 L257.6,90.0 L258.7,90.6 L259.7,90.7 L260.8,90.0 L261.8,89.9 L262.9,90.0 L263.9,90.0 L265.0,90.6 L266.0,90.3 L267.1,90.5 L268.1,90.3 L269.2,91.3 L270.2,90.9 L271.3,91.0 L272.3,91.3 L273.4,91.8 L274.4,91.3 L275.5,91.8 L276.5,91.3 L277.6,91.2 L278.6,91.1 L279.7,90.3 L280.7,90.6 L281.8,90.1 L282.8,89.5 L283.9,90.3 L284.9,89.4 L286.0,89.4 L287.0,89.6 L288.1,89.3 L289.1,88.9 L290.2,88.9 L291.2,88.9 L292.3,89.2 L293.3,88.6 L294.4,90.2 L295.4,90.6 L296.5,91.2 L297.5,92.3 L298.6,92.2 L299.6,92.4 L300.7,92.9 L301.7,93.8 L302.8,94.5 L303.8,96.4 L304.9,97.8 L305.9,99.4 L307.0,101.5 L308.0,103.0 L309.1,104.9 L310.1,106.7 L311.2,109.6 L312.2,111.2 L313.3,113.6 L314.3,115.9 L315.4,116.8 L316.4,119.3 L317.5,122.0 L318.5,123.9 L319.6,125.4 L320.6,128.7 L321.7,132.5 L322.7,135.2 L323.8,138.7 L324.8,141.6 L325.9,145.7 L326.9,149.1 L328.0,152.7 L329.0,155.7 L330.1,160.8 L331.1,164.9 L332.2,168.0 L333.2,173.2 L334.3,177.2 L335.3,179.6 L336.4,184.5 L337.4,187.2 L338.5,191.0 L339.5,195.7 L340.6,199.5 L341.6,202.5 L342.7,206.7 L343.7,210.0 L344.8,212.9 L345.8,215.8 L346.9,219.1 L347.9,223.0 L349.0,224.9 L350.0,229.0 L351.1,231.9 L352.1,234.2 L353.2,237.7 L354.2,241.2 L355.3,244.0 L356.3,246.2 L357.4,250.3 L358.4,252.4 L359.5,255.3 L360.5,256.3 L361.6,259.1 L362.6,260.6 L363.7,263.8 L364.7,264.9 L365.8,266.5 L366.8,268.7 L367.9,271.0 L368.9,272.3 L370.0,272.8 L371.0,274.0 L372.1,276.4 L373.1,276.8 L374.2,278.1 L375.2,278.1 L376.3,279.0 L377.3,280.5 L378.4,280.5 L379.4,280.4 L380.5,282.3 L381.5,282.2 L382.6,283.0 L383.6,282.1 L384.7,283.7 L385.7,282.7 L386.8,284.3 L387.8,284.0 L388.9,283.9 L389.9,284.5 L391.0,285.7 L392.0,284.8 L393.1,284.3 L394.1,285.1 L395.2,284.8 L396.2,284.5 L397.3,284.7 L398.3,284.5 L399.4,284.9 L400.4,285.3 L401.5,285.5 L402.5,286.6 L403.6,285.9 L404.6,286.3 L405.7,285.8 L406.7,286.1 L407.8,285.6 L408.8,286.1 L409.9,285.8 L410.9,287.3 L412.0,287.4 L413.0,286.8 L414.1,287.3 L415.1,288.5 L416.2,287.2 L417.2,288.7 L418.3,288.5 L419.3,288.8 L420.4,289.9 L421.4,289.5 L422.5,289.9 L423.5,290.6 L424.6,291.6 L425.6,290.6 L426.7,291.4 L427.7,291.5 L428.8,291.4 L429.8,291.0 L430.9,290.9 L431.9,290.4 L433.0,290.5 L434.0,291.1 L435.1,292.7 L436.1,292.2 L437.2,292.5 L438.2,292.7 L439.3,294.4 L440.3,294.8 L441.4,294.9 L442.4,294.9 L443.5,295.5 L444.5,296.3 L445.6,297.3 L446.6,297.5 L447.7,298.7 L448.7,299.3 L449.8,301.5 L450.8,302.6 L451.9,302.9 L452.9,303.5 L454.0,305.7 L455.0,305.8 L456.1,307.1 L457.1,307.8 L458.2,309.7 L459.2,311.1 L460.3,312.5 L461.3,313.5 L462.4,315.4 L463.4,316.1 L464.5,318.0 L465.5,319.2 L466.6,321.4 L467.6,322.4 L468.7,324.0 L469.7,326.1 L470.8,327.7 L471.8,330.1 L472.9,332.1 L473.9,334.6 L475.0,336.5 L476.0,338.7 L477.1,341.1 L478.1,342.3 L479.2,344.0 L480.2,346.9 L481.3,347.2 L482.3,349.9 L483.4,351.6 L484.4,352.3 L485.5,355.2 L486.5,356.9 L487.6,358.0 L488.6,359.7 L489.7,361.5 L490.7,361.9 L491.8,364.1 L492.8,365.7 L493.9,367.7 L494.9,369.1 L496.0,370.5 L497.0,371.6 L498.1,373.5 L499.1,374.6 L500.2,376.1 L501.2,376.7 L502.3,377.7 L503.3,379.1 L504.4,380.7 L505.4,381.4 L506.5,383.9 L507.5,384.6 L508.6,385.7 L509.6,386.5 L510.7,387.4 L511.7,387.9 L512.8,387.8 L513.8,390.0 L514.9,390.4 L515.9,390.0 L517.0,390.6 L518.0,391.2 L519.1,390.3 L520.1,391.7 L521.2,391.2 L522.2,390.9 L523.3,391.4 L524.3,392.6 L525.4,391.8 L526.4,392.9 L527.5,393.7 L528.5,392.9 L529.6,392.6 L530.6,392.8 L531.7,393.3 L532.7,393.7 L533.8,393.5 L534.8,393.6 L535.9,392.5 L536.9,392.3 L538.0,392.4 L539.0,393.5 L540.1,392.7 L541.1,393.1 L542.2,391.9 L543.2,391.7 L544.3,392.0 L545.3,393.0 L546.4,393.2 L547.4,393.2 L548.5,392.3 L549.5,392.6 L550.6,392.5 L551.6,392.5 L552.7,391.8 L553.7,393.3 L554.8,392.2 L555.8,393.6 L556.9,393.9 L557.9,392.0 L559.0,392.5 L560.0,393.4 L561.1,394.0 L562.1,393.0 L563.2,392.5 L564.2,392.4 L565.3,394.0 L566.3,392.9 L567.4,393.6 L568.4,392.8 L569.5,393.6 L570.5,394.9 L571.6,393.6 L572.6,395.0 L573.7,394.9 L574.7,395.9 L575.8,395.9 L576.8,395.1 L577.9,396.6 L578.9,396.2 L580.0,395.3 L581.0,395.0 L582.1,396.1 L583.1,396.3 L584.2,396.0 L585.2,395.6 L586.3,396.0 L587.3,396.1 L588.4,397.3 L589.4,395.8 L590.5,397.1 L591.5,397.7 L592.6,396.3 L593.6,397.7 L594.7,397.7 L595.7,398.1 L596.8,396.9 L597.8,396.8 L598.9,396.9 L599.9,398.3 L601.0,397.8 L602.0,397.2 L603.0,397.2 L604.1,396.9 L605.1,396.4 L606.2,396.4 L607.2,398.0 L608.3,397.3 L609.3,398.6 L610.4,397.3 L611.4,397.0 L612.5,397.5 L613.5,396.8 L614.6,397.1 L615.6,398.4 L616.7,398.5 L617.7,398.4 L618.8,397.9 L619.8,398.4 L620.9,398.5 L621.9,397.7 L623.0,397.8 L624.0,396.4 L625.1,397.5 L626.1,397.1 L627.2,397.6 L628.2,397.5 L629.3,396.7 L630.3,395.9 L631.4,397.6 L632.4,396.3 L633.5,396.7 L634.5,396.5 L635.6,396.3 L636.6,397.2 L637.7,397.9 L638.7,396.5 L639.8,396.9 L640.8,396.2 L641.9,396.6 L642.9,396.3 L644.0,395.7 L645.0,395.5 L646.1,395.5 L647.1,397.0 L648.2,396.4 L649.2,395.6 L650.3,396.9 L651.3,397.4 L652.4,396.2 L653.4,395.2 L654.5,395.1 L655.5,394.8 L656.6,395.2 L657.6,394.7 L658.7,394.9 L659.7,394.9 L660.8,395.6 L661.8,396.5 L662.9,396.4 L663.9,395.6 L665.0,395.4 L666.0,395.5 L667.1,395.2 L668.1,395.0 L669.2,394.4 L670.2,394.7 L671.3,396.2 L672.3,394.7 L673.4,395.2 L674.4,395.6 L675.5,396.1 L676.5,394.8 L677.6,394.6 L678.6,394.5 L679.7,394.8 L680.7,394.9 L681.8,396.1 L682.8,396.1 L683.9,396.1 L684.9,394.3 L686.0,393.8 L687.0,395.1 L688.1,395.9 L689.1,395.1 L690.2,395.1 L691.2,393.8 L692.3,394.4 L693.3,395.6 L694.4,395.7 L695.4,395.8 L696.5,396.0 L697.5,394.5 L698.6,393.8 L699.6,393.8 L700.7,394.6 L701.7,395.2 L702.8,396.0 L703.8,395.7 L704.9,395.5 L705.9,395.8 L707.0,395.2 L708.0,395.3 L709.1,394.3 L710.1,395.7 L711.2,394.9 L712.2,396.2 L713.3,396.0 L714.3,395.2 L715.4,394.7 L716.4,394.8 L717.5,395.8 L718.5,396.2 L719.6,395.0 L720.6,394.6 L721.7,395.5 L722.7,395.9 L723.8,395.6 L724.8,395.2 L725.9,395.9 L726.9,394.8 L728.0,395.2 L729.0,395.6 L730.1,396.9 L731.1,396.5 L732.2,396.9 L733.2,396.2 L734.3,395.5 L735.3,395.3 L736.4,396.9 L737.4,396.7 L738.5,395.8 L739.5,395.0 L740.6,395.8 L741.6,396.4 L742.7,396.0 L743.7,395.5 L744.8,396.3 L745.8,397.1 L746.9,395.7 L747.9,395.0 L749.0,395.5 L750.0,395.8 L751.1,396.4 L752.1,395.5 L753.2,396.6 L754.2,396.8 L755.3,396.3 L756.3,395.5 L757.4,397.0 L758.4,395.9 L759.5,396.8 L760.5,395.7 L761.6,395.4 L762.6,396.5 L763.7,395.7 L764.7,397.0 L765.8,396.3 L766.8,395.5 L767.9,395.3 L768.9,395.7 L770.0,396.3 L771.0,397.1 L772.1,395.4 L773.1,395.5 L774.2,395.1 L775.2,396.6 L776.3,395.1 L777.3,394.4 L778.4,394.2 L779.4,394.9 L780.5,396.1 L781.5,396.3 L782.6,395.9 L783.6,396.4 L784.7,396.3 L785.7,394.9 L786.8,394.2 L787.8,395.6 L788.9,395.5 L789.9,393.8 L791.0,394.8 L792.0,394.3 L793.1,394.2 L794.1,394.0 L795.2,393.5 L796.2,393.0 L797.3,393.5 L798.3,393.7 L799.4,395.0 L800.4,393.5 L801.5,394.9 L802.5,393.6 L803.6,393.5 L804.6,394.5 L805.7,394.7 L806.7,393.8 L807.8,392.7 L808.8,393.3 L809.9,393.2 L810.9,394.4 L812.0,393.0 L813.0,393.0 L814.1,394.1 L815.1,392.5 L816.2,392.9 L817.2,393.8 L818.3,393.9 L819.3,392.4 L820.4,391.9 L821.4,391.9 L822.5,393.7 L823.5,392.7 L824.6,393.5 L825.6,394.0 L826.7,392.9 L827.7,392.5 L828.8,393.8 L829.8,393.4 L830.9,392.5 L831.9,393.2 L833.0,392.5 L834.0,392.2 L835.1,391.6 L836.1,393.0 L837.2,393.7 L838.2,393.3 L839.3,393.9 L840.3,392.1 L841.4,392.2 L842.4,392.8 L843.5,394.1 L844.5,394.5 L845.6,393.4 L846.6,393.0 L847.7,393.3 L848.7,393.6 L849.8,394.7 L850.8,393.4 L851.9,394.6 L852.9,394.8 L854.0,395.1 L855.0,395.2 L856.1,394.9 L857.1,394.3 L858.2,394.2 L859.2,394.3 L860.3,395.2 L861.3,393.9 L862.4,393.8 L863.4,395.0 L864.5,394.2 L865.5,393.6 L866.6,393.4 L867.6,394.5 L868.7,394.3 L869.7,395.6 L870.8,395.8 L871.8,396.0 L872.9,394.5 L873.9,393.7 L875.0,393.6 L876.0,394.4 L877.1,395.1 L878.1,394.7 L879.2,394.1 L880.2,394.3 L881.3,394.8 L882.3,395.0 L883.4,395.2 L884.4,395.5 L885.5,395.1 L886.5,393.8 L887.6,395.1 L888.6,394.1 L889.7,394.5 L890.7,394.1 L891.8,394.8 L892.8,393.8 L893.9,393.6 L894.9,393.6 L896.0,393.3 L897.0,394.9 L898.1,394.6 L899.1,393.9 L900.2,393.9 L901.2,395.2 L902.3,394.4 L903.3,393.6" fill="none" stroke="#f6ae68" stroke-width="0.72" stroke-linejoin="round"/>
 <!-- markers -->
 <path d="M455.3,36.5H463.3L459.3,41.2Z" fill="none" stroke="#b4b8dc" stroke-width="0.8"/>
 <path d="M552.6,36.2H561.4L557,41Z" fill="#2a84ea"/>
 <path d="M904.3,229.1V237.5L899.1,233.4Z" fill="#f6ea18"/>
 <!-- C1 / M1 side markers -->
 <text x="1.8" y="257.3" font-size="6.6" font-weight="bold" fill="#e8345c" textLength="8.2" lengthAdjust="spacingAndGlyphs">C1</text>
 <path d="M10.2,253.2L12.4,254.9L10.2,256.6Z" fill="#e8345c"/>
 <path d="M1.3,361.8H11.1V364.4L12.6,365.9L11.1,367.4V370H1.3Z" fill="#e88a24"/>
 <text x="1.9" y="368.3" font-size="6.2" font-weight="bold" fill="#4a2400" textLength="8.4" lengthAdjust="spacingAndGlyphs">M1</text>
 <text x="798.6" y="455.7" font-size="7.2" fill="#f2f2f2" textLength="59.7" lengthAdjust="spacing">Average 256/256</text>
 <!-- right icons -->
 <g fill="none" stroke="#ececec" stroke-width="0.9">
  <path d="M863.5,27.7H865.3L866,26.5H868.6L869.3,27.7H870.8V33.4H863.5Z"/>
  <path d="M863.5,33.5H870.8" stroke-width="1.1"/>
  <circle cx="867.2" cy="30.3" r="1.6"/>
  <path d="M878,26.7H880.3M881.8,26.7H884.6V28.6M884.6,30.7V33.3" stroke-width="1"/>
  <rect x="892.5" y="28.2" width="2.5" height="4.9" rx="1.1"/>
  <path d="M895.6,26.3Q898.8,26.4 898.7,29V32.9H897"/>
 </g>
</svg>

<div id="bot" class="abs"></div>

<!-- C1 -->
<div class="cb" style="left:3px;width:56.5px;">
 <div class="hd"></div>
 <div class="t" style="left:0;top:0.6px;width:19px;height:7.4px;background:#f6f01c;color:#4a4800;text-align:center;font-size:7.6px;line-height:7.6px;">C1</div>
 <div class="t" style="right:1px;top:0.6px;color:#94941c;font-size:6.2px;letter-spacing:0.25px;">H&nbsp;&nbsp;DC50</div>
 <div class="t" style="left:0.3px;top:9.1px;letter-spacing:-0.7px;">1X</div><div class="t" style="right:0.5px;top:9.1px;">500mV/</div>
 <div class="t" style="left:0.2px;top:17.6px;letter-spacing:-0.75px;">FULL</div><div class="t" style="right:0.5px;top:17.6px;">0.00V</div>
</div>
<!-- C2 -->
<div class="cb" style="left:63px;width:56.5px;">
 <div class="hd"></div>
 <div class="t" style="left:0;top:0.6px;width:20px;height:7.4px;background:#f81490;color:#80104c;text-align:center;font-size:7.6px;line-height:7.6px;">C2</div>
 <div class="t" style="right:1px;top:0.6px;color:#a0165a;font-size:6.2px;letter-spacing:0.25px;">H&nbsp;&nbsp;DC50</div>
 <div class="t" style="left:0.3px;top:9.1px;letter-spacing:-0.7px;">1X</div><div class="t" style="right:0.5px;top:9.1px;">500mV/</div>
 <div class="t" style="left:0.2px;top:17.6px;letter-spacing:-0.75px;">FULL</div><div class="t" style="right:0.5px;top:17.6px;">0.00V</div>
</div>
<!-- M1 -->
<div class="cb" style="left:123px;width:57px;top:483.2px;height:25px;border:1px solid #2c66c0;">
 <div class="hd"></div>
 <div class="t" style="left:0.6px;top:0.8px;width:19.6px;height:7.2px;background:#f0882a;color:#5a3008;text-align:center;font-size:7.6px;line-height:7.6px;">M1</div>
 <div class="t" style="right:0.8px;top:1.2px;color:#cc7e30;font-size:6.6px;">F2</div>
 <div class="t" style="left:0.5px;top:8.3px;font-size:7px;">5.00ns/</div><div class="t" style="right:0.5px;top:8.3px;font-size:7px;">200mV/</div>
 <div class="t" style="left:0.5px;top:17px;font-size:7px;">-3.06us</div><div class="t" style="right:0.5px;top:17px;font-size:7px;">400mV</div>
</div>
<!-- dashed add box -->
<div class="abs" style="left:183px;top:482.6px;width:59px;height:26px;border:1px dotted #363636;"></div>
<div class="abs" style="left:213.2px;top:489.6px;width:1px;height:14.4px;background:#7a7a7a;"></div>
<div class="abs" style="left:200.6px;top:496.9px;width:24px;height:1px;background:#2c2c2c;"></div>

<!-- Timebase -->
<div class="cb" style="left:709.6px;width:75.6px;">
 <div class="hd"></div>
 <div class="t" style="left:1.2px;top:0.4px;font-size:7px;color:#f0f0f0;">Timebase</div>
 <div class="t" style="left:0.6px;top:9.1px;">-2.20us</div><div class="t" style="right:2.2px;top:9.1px;">2.00us/div</div>
 <div class="t" style="left:0.6px;top:17.6px;">200kpts</div><div class="t" style="right:2px;top:17.6px;letter-spacing:-0.1px;">10.0GSa/s</div>
</div>
<!-- Trigger -->
<div class="cb" style="left:787px;width:68.6px;">
 <div class="hd"></div>
 <div class="t" style="left:1.6px;top:0.4px;font-size:6.9px;color:#e4de30;">Trigger</div>
 <div class="t" style="right:1.4px;top:0.4px;font-size:7px;color:#e4de30;">C1 DC</div>
 <div class="t" style="left:1.4px;top:9.1px;">Stop</div><div class="t" style="right:1.2px;top:9.1px;">210mV</div>
 <div class="t" style="left:1.4px;top:17.6px;">Pulse</div><div class="t" style="right:1.2px;top:17.6px;">Negative</div>
</div>
<!-- clock -->
<svg class="abs" style="left:876px;top:484px" width="34" height="10" viewBox="0 0 34 10">
 <g fill="none" stroke="#8a8a8a" stroke-width="0.8">
  <path d="M5.6,1V7.6M4,3.2L5.6,5.4L7.2,2.6M4.4,7.4L5.6,9L6.8,7.4"/>
  <path d="M12.4,2H16.4V4.4H12.4ZM14.4,4.4V6M11.2,6H17.6M11.2,6V7.8M17.6,6V7.8M14.4,6V7.8"/>
  <path d="M21.8,2H25.8V4.4H21.8ZM23.8,4.4V6M20.6,6H27M20.6,6V7.8M27,6V7.8M23.8,6V7.8"/>
 </g>
 <circle cx="16.2" cy="5.6" r="1.7" fill="#e4141c"/>
</svg>
<div class="abs" style="left:860px;top:493.5px;width:48px;text-align:center;color:#f2f2f2;font-size:8.2px;line-height:9px;letter-spacing:0.1px;">17:39:11</div>
<div class="abs" style="left:858px;top:501.8px;width:52px;text-align:center;color:#f2f2f2;font-size:8.4px;line-height:9px;letter-spacing:0.2px;">2023/11/1</div>
</div>
</body></html>
